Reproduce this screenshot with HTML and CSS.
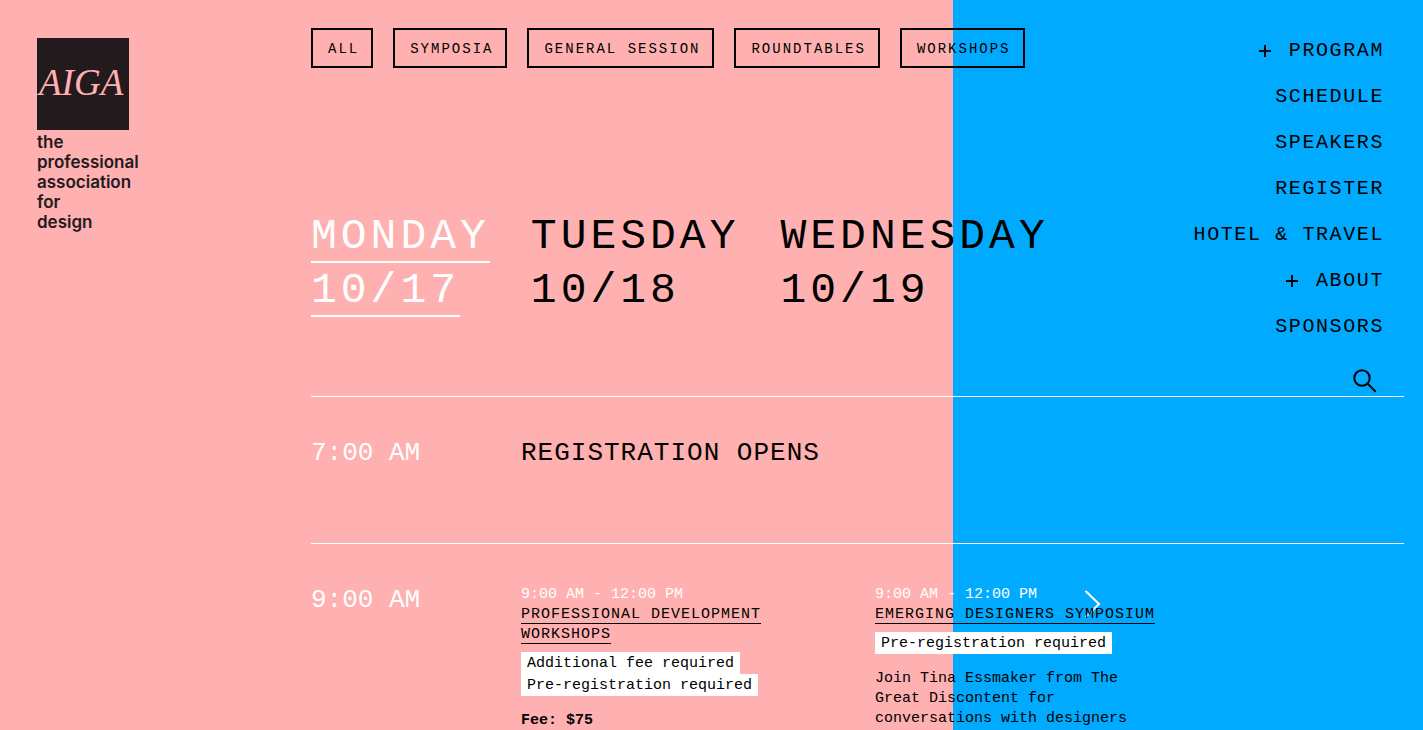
FILE: index.html
```
<!DOCTYPE html>
<html lang="en">
<head>
<meta charset="utf-8">
<title>AIGA Design Conference – Schedule</title>
<link rel="stylesheet" href="styles.css">
</head>
<body>
<div class="page">
  <header class="brand">
    <a class="logo" href="#">
      <span class="logo-mark">AIGA</span>
      <span class="logo-text">the<br>professional<br>association<br>for<br>design</span>
    </a>
  </header>

  <main class="schedule">
    <div class="filters">
      <button class="filter" type="button">ALL</button>
      <button class="filter" type="button">SYMPOSIA</button>
      <button class="filter" type="button">GENERAL SESSION</button>
      <button class="filter" type="button">ROUNDTABLES</button>
      <button class="filter" type="button">WORKSHOPS</button>
    </div>

    <div class="days">
      <a class="day day-active" href="#mon"><span>MONDAY<br>10/17</span></a>
      <a class="day" href="#tue"><span>TUESDAY<br>10/18</span></a>
      <a class="day" href="#wed"><span>WEDNESDAY<br>10/19</span></a>
    </div>

    <section class="slot">
      <h2 class="slot-time">7:00 AM</h2>
      <h3 class="slot-title">REGISTRATION OPENS</h3>
    </section>

    <section class="slot slot-last">
      <h2 class="slot-time">9:00 AM</h2>
      <div class="events">
        <button class="next" type="button" aria-label="Next">
          <svg width="18" height="28" viewBox="0 0 18 28" fill="none" stroke="#fff" stroke-width="2"><path d="M1.5 1L15 14L1.5 27"/></svg>
        </button>
        <article class="event">
          <p class="event-time">9:00 AM - 12:00 PM</p>
          <h3 class="event-title"><a href="#pdw">PROFESSIONAL DEVELOPMENT WORKSHOPS</a></h3>
          <div class="badges">
            <span class="badge">Additional fee required</span>
            <span class="badge">Pre-registration required</span>
          </div>
          <p class="event-body"><strong>Fee: $75</strong></p>
        </article>
        <article class="event">
          <p class="event-time">9:00 AM - 12:00 PM</p>
          <h3 class="event-title"><a href="#eds">EMERGING DESIGNERS SYMPOSIUM</a></h3>
          <div class="badges">
            <span class="badge">Pre-registration required</span>
          </div>
          <p class="event-body">Join Tina Essmaker from The Great Discontent for conversations with designers</p>
        </article>
      </div>
    </section>
  </main>

  <nav class="menu">
    <button class="menu-item" type="button"><svg class="plus" width="12" height="12" viewBox="0 0 12 12" stroke="#000" stroke-width="2"><path d="M6 0V12M0 6H12"/></svg>PROGRAM</button>
    <a class="menu-item" href="#schedule">SCHEDULE</a>
    <a class="menu-item" href="#speakers">SPEAKERS</a>
    <a class="menu-item" href="#register">REGISTER</a>
    <a class="menu-item" href="#hotel">HOTEL &amp; TRAVEL</a>
    <button class="menu-item" type="button"><svg class="plus" width="12" height="12" viewBox="0 0 12 12" stroke="#000" stroke-width="2"><path d="M6 0V12M0 6H12"/></svg>ABOUT</button>
    <a class="menu-item" href="#sponsors">SPONSORS</a>
    <button class="search" type="button" aria-label="Search">
      <svg width="24" height="24" viewBox="0 0 24 24" fill="none" stroke="#000" stroke-width="2"><circle cx="9" cy="9" r="7.7"/><path d="M14.5 14.5L22.7 22.7"/></svg>
    </button>
  </nav>
</div>
</body>
</html>
```
FILE: styles.css
```
* {
  box-sizing: border-box;
}

body {
  margin: 0;
  min-height: 100vh;
  background: linear-gradient(to right, #ffb0b0 67%, #00aaff 67%);
  color: #000;
  font-family: "Liberation Mono", monospace;
}

a {
  color: inherit;
  text-decoration: none;
}

button {
  background: none;
  border: 0;
  padding: 0;
  color: inherit;
  font: inherit;
  cursor: pointer;
}

h2, h3, p {
  margin: 0;
  font-weight: normal;
}

.page {
  position: relative;
  display: grid;
  grid-template-columns: 274px 1fr;
  padding: 0 19px 0 37px;
}

/* Logo */
.brand {
  padding-top: 38px;
}

.logo {
  display: inline-block;
  color: #231a1e;
}

.logo-mark {
  display: block;
  width: 92px;
  height: 92px;
  padding-left: 2px;
  background: #231a1e;
  color: #ffb0b0;
  font: italic 37px/90px "Liberation Serif", serif;
}

.logo-text {
  display: block;
  padding-top: 2px;
  font: 600 17px/20px Inter, sans-serif;
}

/* Filters */
.filters {
  display: flex;
  gap: 20px;
  padding-top: 28px;
}

.filter {
  height: 40px;
  padding: 1px 12px 0 15px;
  border: 2px solid #000;
  font-size: 14px;
  letter-spacing: 2px;
  white-space: nowrap;
}

/* Day tabs */
.days {
  display: flex;
  gap: 41px;
  margin: 142px 0 78px;
  font-size: 43px;
  line-height: 54px;
  letter-spacing: 4px;
}

.day-active {
  color: #fff;
}

.day-active span {
  border-bottom: 2px solid #fff;
}

/* Time slots */
.slot {
  display: grid;
  grid-template-columns: 210px 1fr;
  padding: 40px 0 74px;
  border-top: 1px solid #fff;
}

.slot-last {
  padding-bottom: 0;
}

.slot-time,
.slot-title {
  font-size: 26px;
  line-height: 32px;
}

.slot-time {
  color: #fff;
}

.slot-title {
  letter-spacing: 1px;
}

.events {
  position: relative;
  display: flex;
  gap: 70px;
  padding-top: 1px;
  font-size: 15px;
  line-height: 20px;
}

.event {
  position: relative;
  flex: 0 0 284px;
}

.event-time {
  color: #fff;
}

.event-title {
  font-size: 15px;
  letter-spacing: 1px;
}

.event-title a {
  border-bottom: 1px solid #000;
}

.badges {
  display: flex;
  flex-direction: column;
  align-items: flex-start;
  margin: 7px 0 15px;
}

.badge {
  padding: 2px 6px 0;
  background: #fff;
}

.next {
  position: absolute;
  top: 6px;
  left: 563px;
}

.next svg {
  display: block;
}

/* Main menu */
.menu {
  position: absolute;
  top: 28px;
  right: 39px;
  display: flex;
  flex-direction: column;
  align-items: flex-end;
}

.menu-item {
  display: flex;
  align-items: center;
  font-size: 20px;
  line-height: 46px;
  letter-spacing: 0.08em;
}

.plus {
  margin-right: 18px;
}

.search {
  margin: 19px 7px 0 0;
}

.search svg {
  display: block;
}
```
